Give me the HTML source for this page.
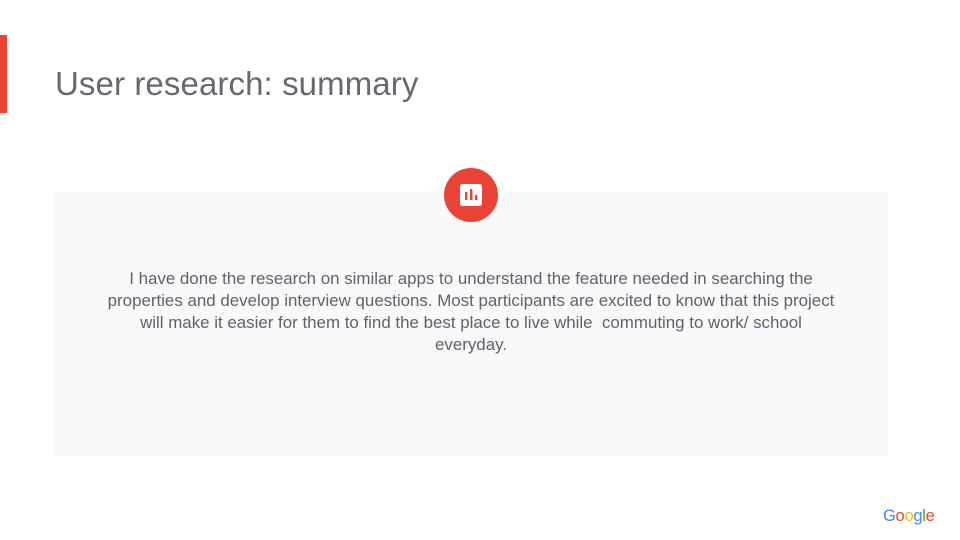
<!DOCTYPE html>
<html><head><meta charset="utf-8"><style>
html,body{margin:0;padding:0}
body{width:960px;height:540px;position:relative;background:#fff;overflow:hidden;font-family:"Liberation Sans",sans-serif}
.bar{position:absolute;left:0;top:35px;width:7px;height:78px;background:#ea4335}
h1{position:absolute;left:55px;top:65px;margin:0;font-weight:400;font-size:33px;color:#666a70;letter-spacing:0.1px}
.panel{position:absolute;left:54px;top:192px;width:834px;height:264px;background:#f8f9fa}
.txt{position:absolute;left:54px;top:268px;width:834px;text-align:center;font-size:16.9px;line-height:22px;color:#5f6368}
.icon{position:absolute;left:444px;top:168px}
.g{position:absolute;left:883px;top:507px;font-size:16.5px;letter-spacing:-0.3px}
</style></head><body>
<div class="bar"></div>
<h1>User research: summary</h1>
<div class="panel"></div>
<svg class="icon" width="54" height="54" viewBox="0 0 54 54">
<circle cx="27" cy="27" r="27" fill="#ea4335"/>
<rect x="16" y="16" width="22" height="22" rx="2.5" fill="#fff"/>
<rect x="21" y="24" width="2.4" height="8" fill="#ea4335"/>
<rect x="26" y="21" width="2.4" height="11" fill="#ea4335"/>
<rect x="31" y="27" width="2.4" height="5" fill="#ea4335"/>
</svg>
<div class="txt">I have done the research on similar apps to understand the feature needed in searching the<br>properties and develop interview questions. Most participants are excited to know that this project<br>will make it easier for them to find the best place to live while &nbsp;commuting to work/ school<br>everyday.</div>
<div class="g"><span style="color:#4285f4">G</span><span style="color:#ea4335">o</span><span style="color:#fbbc05">o</span><span style="color:#4285f4">g</span><span style="color:#34a853">l</span><span style="color:#ea4335">e</span></div>
</body></html>
